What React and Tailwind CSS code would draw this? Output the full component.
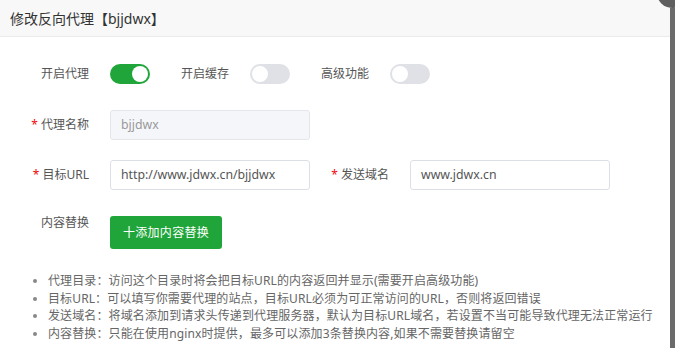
const font = {
  fontFamily: '"Noto Sans", "Noto Sans CJK SC", sans-serif',
};

const Toggle = ({ on }) => (
  <div
    className={`relative w-10 h-5 rounded-full shrink-0 ${
      on ? "bg-[#20a53a]" : "bg-[#dfe1e6]"
    }`}
  >
    <div
      className={`absolute top-[2px] w-4 h-4 rounded-full bg-white ${
        on ? "left-[22px]" : "left-[2px]"
      }`}
    ></div>
  </div>
);

const Label = ({ required, children }) => (
  <div className="w-[100px] shrink-0 pr-[21px] text-right text-[12px] text-[#555]">
    {required && <span className="text-[#ef0808] mr-[3px]">*</span>}
    {children}
  </div>
);

const Input = ({ value, disabled }) => (
  <div
    className={`w-[200px] h-[30px] shrink-0 flex items-center px-[10px] border rounded-[3px] text-[12.3px] ${
      disabled
        ? "bg-[#f5f6fa] border-[#e4e6eb] text-[#999]"
        : "bg-white border-[#dcdfe6] text-[#555]"
    }`}
  >
    {value}
  </div>
);

const tips = [
  "代理目录：访问这个目录时将会把目标URL的内容返回并显示(需要开启高级功能)",
  "目标URL：可以填写你需要代理的站点，目标URL必须为可正常访问的URL，否则将返回错误",
  "发送域名：将域名添加到请求头传递到代理服务器，默认为目标URL域名，若设置不当可能导致代理无法正常运行",
  "内容替换：只能在使用nginx时提供，最多可以添加3条替换内容,如果不需要替换请留空",
];

export default function App() {
  return (
    <div
      className="relative w-[675px] h-[348px] overflow-hidden bg-white"
      style={font}
    >
      {/* header */}
      <div className="h-[37px] bg-[#f8f8f8] border-b border-[#ebebeb] flex items-center pl-[10px] text-[14px] text-[#333]">
        修改反向代理【bjjdwx】
      </div>

      {/* close button + scrollbar edge */}
      <div className="absolute right-[-12px] top-[-22px] w-[30px] h-[30px] rounded-full bg-[#5f5f5f]"></div>
      <div className="absolute right-0 top-[8px] bottom-0 w-[5px] bg-[#6b6b6b]"></div>

      <div className="pl-[10px] pt-[27px]">
        <div className="flex items-center h-5">
          <Label>开启代理</Label>
          <Toggle on />
          <Label>开启缓存</Label>
          <Toggle />
          <Label>高级功能</Label>
          <Toggle />
        </div>

        <div className="flex items-center mt-[26px]">
          <Label required>代理名称</Label>
          <Input value="bjjdwx" disabled />
        </div>

        <div className="flex items-center mt-[20px]">
          <Label required>目标URL</Label>
          <Input value="http://www.jdwx.cn/bjjdwx" />
          <Label required>发送域名</Label>
          <Input value="www.jdwx.cn" />
        </div>

        <div className="flex items-start mt-[28px]">
          <div className="-mt-[4px]">
            <Label>内容替换</Label>
          </div>
          <button className="w-[112px] h-[33px] -mt-[2px] rounded-[3px] bg-[#20a53a] text-white text-[12px] tracking-[0.3px]">
            十添加内容替换
          </button>
        </div>

        <ul className="mt-[23px] pl-[38px] list-disc text-[12px] leading-[17.7px] tracking-[0.12px] text-[#666] marker:text-[#888]">
          {tips.map((t) => (
            <li key={t}>{t}</li>
          ))}
        </ul>
      </div>
    </div>
  );
}
